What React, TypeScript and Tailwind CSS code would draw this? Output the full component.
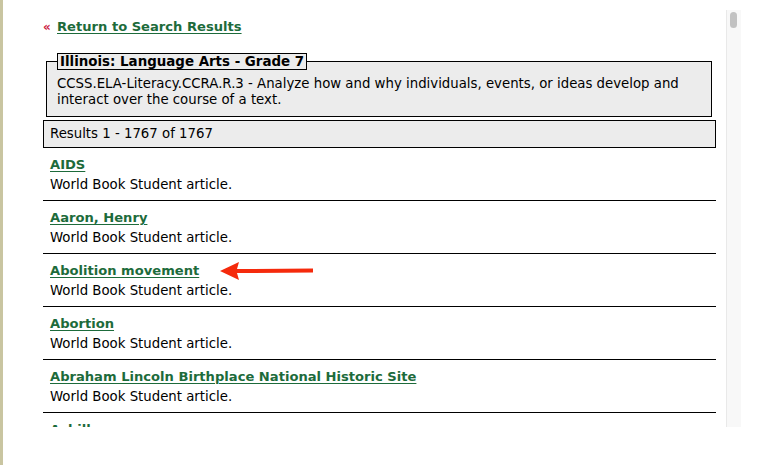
import React from "react";

// ---------------------------------------------------------------------------
// Standards search results — back link, standard fieldset, results count
// and a clipped, scrollable list of World Book articles.
// ---------------------------------------------------------------------------

const ARTICLES: string[] = [
  "AIDS",
  "Aaron, Henry",
  "Abolition movement",
  "Abortion",
  "Abraham Lincoln Birthplace National Historic Site",
  "Achilles",
];

const LINK = "text-[13.1px] font-bold text-[#1d6b3b] underline decoration-1 underline-offset-2";

export default function App() {
  return (
    <div
      className="flex h-[465px] w-[765px] bg-white text-[13.3px] text-black"
      style={{ fontFamily: '"DejaVu Sans", Verdana, sans-serif' }}
    >
      {/* Khaki edge of the outer frame */}
      <div className="w-[3px] shrink-0 bg-[#c9c5a1]" />

      <div className="flex h-[427px] w-[738px] pt-[10px]">
        {/* Scroll area */}
        <div className="relative flex-1 overflow-hidden pl-[40px] pr-[10px]">
          <div className="flex items-center gap-[5px] pt-[8px] leading-[18px]">
            <span className="w-[9px] text-[12px] font-bold text-[#cc2244]">«</span>
            <a href="#" className={LINK}>
              Return to Search Results
            </a>
          </div>

          <fieldset className="ml-[3px] mr-[4px] mt-[17px] border border-black bg-[#ececec] px-[10px] pb-[8px] pt-[6px]">
            <legend className="border border-black bg-[#ececec] px-[2px] text-[13.4px] font-bold leading-[15px]">
              Illinois: Language Arts - Grade 7
            </legend>
            <p className="leading-[16px]">
              CCSS.ELA-Literacy.CCRA.R.3 - Analyze how and why individuals, events, or ideas develop and
              interact over the course of a text.
            </p>
          </fieldset>

          <div className="mt-[3px] border border-black bg-[#ececec] px-[6px] py-[3px] leading-[20px]">
            Results 1 - 1767 of 1767
          </div>

          <ul>
            {ARTICLES.map((title) => (
              <li key={title} className="border-b border-black px-[7px] pb-[5px] pt-[7px] leading-[20px]">
                <a href="#" className={LINK}>
                  {title}
                </a>
                <div>World Book Student article.</div>
              </li>
            ))}
          </ul>

          {/* Red annotation arrow pointing at "Abolition movement" */}
          <svg
            className="absolute left-[216px] top-[250px]"
            width="96"
            height="22"
            viewBox="0 0 96 22"
          >
            <path d="M1 11 L20 2 L18 9 L94 8.5 L94 12.5 L18 13 L20 20 Z" fill="#f52a0c" />
          </svg>
        </div>

        {/* Scrollbar */}
        <div className="w-[15px] shrink-0 border-l border-[#e9e9e9] bg-[#f8f8f8] pt-[2px]">
          <div className="ml-[3px] h-[16px] w-[7px] rounded-full bg-[#c2c2c2]" />
        </div>
      </div>
    </div>
  );
}
